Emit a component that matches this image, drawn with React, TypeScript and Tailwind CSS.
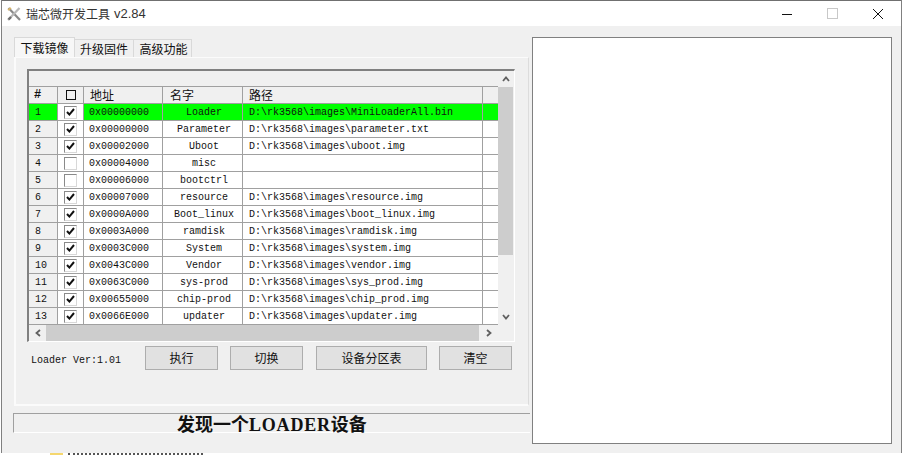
const rows = [
  ['1', true, '0x00000000', 'Loader', 'D:\\rk3568\\images\\MiniLoaderAll.bin'],
  ['2', true, '0x00000000', 'Parameter', 'D:\\rk3568\\images\\parameter.txt'],
  ['3', true, '0x00002000', 'Uboot', 'D:\\rk3568\\images\\uboot.img'],
  ['4', false, '0x00004000', 'misc', ''],
  ['5', false, '0x00006000', 'bootctrl', ''],
  ['6', true, '0x00007000', 'resource', 'D:\\rk3568\\images\\resource.img'],
  ['7', true, '0x0000A000', 'Boot_linux', 'D:\\rk3568\\images\\boot_linux.img'],
  ['8', true, '0x0003A000', 'ramdisk', 'D:\\rk3568\\images\\ramdisk.img'],
  ['9', true, '0x0003C000', 'System', 'D:\\rk3568\\images\\system.img'],
  ['10', true, '0x0043C000', 'Vendor', 'D:\\rk3568\\images\\vendor.img'],
  ['11', true, '0x0063C000', 'sys-prod', 'D:\\rk3568\\images\\sys_prod.img'],
  ['12', true, '0x00655000', 'chip-prod', 'D:\\rk3568\\images\\chip_prod.img'],
  ['13', true, '0x0066E000', 'updater', 'D:\\rk3568\\images\\updater.img'],
] as const;

const cell = 'h-full shrink-0 border-r border-b border-[#a0a0a0] flex items-center';
const cjk = "font-['Noto_Sans_CJK_SC',sans-serif]";

const Check = ({ on }: { on: boolean }) => (
  <div className="w-[13px] h-[13px] border border-[#8a8a8a] border-r-[#d8d8d8] border-b-[#d8d8d8] bg-white flex items-center justify-center">
    {on && (
      <svg width="9" height="9" viewBox="0 0 9 9">
        <path d="M1 4 L3.4 6.6 L8 1" fill="none" stroke="#111" strokeWidth="2" />
      </svg>
    )}
  </div>
);

const Btn = ({ label, w }: { label: string; w: string }) => (
  <button className={`${w} h-[24px] bg-[#e1e1e1] border border-[#adadad] text-[12px] text-[#111] ${cjk}`}>{label}</button>
);

const Chevron = ({ d }: { d: string }) => (
  <svg width="8" height="8" viewBox="0 0 8 8">
    <path d={d} fill="none" stroke="#606060" strokeWidth="1.8" />
  </svg>
);

export default function App() {
  return (
    <div className="w-[903px] h-[455px] overflow-hidden bg-white flex flex-col font-['Liberation_Mono',monospace] text-[10px] text-[#111]">
      {/* window */}
      <div className="h-[453px] w-[901px] ml-px shrink-0 flex flex-col bg-[#f0f0f0] border-x border-[#808080]">
        {/* title bar */}
        <div className="h-[26px] shrink-0 bg-white border-t border-[#707070] flex items-center pl-[5px]">
          <svg width="14" height="14" viewBox="0 0 14 14" className="mr-[5px]">
            <path d="M1.5 1 L13 13" stroke="#8a8a8a" strokeWidth="2.2" />
            <path d="M12.5 1 L1 13" stroke="#b8b8b8" strokeWidth="2.2" />
            <path d="M1 3 L4 1" stroke="#d9b56a" strokeWidth="2" />
            <path d="M1.5 12.5 L4 10" stroke="#6f6f6f" strokeWidth="2.4" />
          </svg>
          <span className={`text-[12px] text-[#333] ${cjk}`}>瑞芯微开发工具</span>
          <span className="ml-[4px] font-['Liberation_Sans',sans-serif] text-[13px] text-[#333]">v2.84</span>
          <div className="ml-auto flex items-center">
            <svg width="12" height="12" viewBox="0 0 12 12" className="mr-[34px]">
              <path d="M1 6.5 H11" stroke="#111" strokeWidth="1" />
            </svg>
            <div className="w-[11px] h-[11px] border border-[#c8c8c8] mr-[34px]" />
            <svg width="12" height="12" viewBox="0 0 12 12" className="mr-[17px]">
              <path d="M1 1 L11 11 M11 1 L1 11" stroke="#111" strokeWidth="1" />
            </svg>
          </div>
        </div>

        <div className="flex-1 flex pl-[11px] pt-[11px]">
          {/* left column */}
          <div className="w-[517px] shrink-0 flex flex-col">
            <div className={`h-[20px] flex items-end text-[12px] pl-[1px] ${cjk}`}>
              <div className="w-[61px] h-[20px] bg-[#f7f7f7] border-x border-t border-[#d9d9d9] flex items-center justify-center">下载镜像</div>
              <div className="w-[59px] h-[18px] bg-[#f0f0f0] border-r border-t border-[#d9d9d9] flex items-center justify-center">升级固件</div>
              <div className="w-[58px] h-[18px] bg-[#f0f0f0] border-r border-t border-[#d9d9d9] flex items-center justify-center pl-[2px]">高级功能</div>
            </div>
            <div className="w-[515px] h-[349px] ml-[1px] border-l-2 border-r border-b-2 border-t border-[#fbfbfb] border-r-[#dcdcdc] pl-[11px] pt-[11px]">
              {/* list */}
              <div className="w-[488px] h-[273px] border-t-2 border-l-2 border-[#808080] border-r border-b border-r-white border-b-white flex flex-col">
                <div className="flex h-[255px]">
                  <div className="w-[469px] flex flex-col bg-white">
                    <div className="h-[16px] bg-[#f0f0f0] border-b border-[#a0a0a0]" />
                    <div className={`h-[17px] flex bg-[#f0f0f0] text-[12px] ${cjk}`}>
                      <div className={`${cell} w-[29px] pl-[5px] font-bold font-['Liberation_Mono']`}>#</div>
                      <div className={`${cell} w-[26px] justify-center`}>
                        <div className="w-[10px] h-[10px] border border-[#111]" />
                      </div>
                      <div className={`${cell} w-[79px] pl-[6px]`}>地址</div>
                      <div className={`${cell} w-[80px] pl-[7px]`}>名字</div>
                      <div className={`${cell} w-[240px] pl-[6px]`}>路径</div>
                      <div className={`${cell} w-[15px] border-r-0`} />
                    </div>
                    {rows.map(([n, on, addr, name, path], i) => (
                      <div key={n} className={`h-[17px] flex shrink-0 ${i === 0 ? 'bg-[#00ff00]' : ''}`}>
                        <div className={`${cell} w-[29px] pl-[6px] text-[10px] ${i === 0 ? '' : 'bg-[#f0f0f0]'}`}>{n}</div>
                        <div className={`${cell} w-[26px] justify-center bg-white`}>
                          <Check on={on} />
                        </div>
                        <div className={`${cell} w-[79px] pl-[5px]`}>{addr}</div>
                        <div className={`${cell} w-[80px] justify-center pl-[3px]`}>{name}</div>
                        <div className={`${cell} w-[240px] pl-[6px]`}>{path}</div>
                        <div className={`${cell} w-[15px] border-r-0`} />
                      </div>
                    ))}
                  </div>
                  <div className="w-[15px] flex flex-col bg-[#f0f0f0]">
                    <div className="h-[16px] flex items-center justify-center">
                      <Chevron d="M1 6 L4 2.5 L7 6" />
                    </div>
                    <div className="h-[168px] bg-[#cdcdcd]" />
                    <div className="flex-1" />
                    <div className="h-[17px] flex items-center justify-center">
                      <Chevron d="M1 2 L4 5.5 L7 2" />
                    </div>
                  </div>
                </div>
                <div className="h-[16px] flex bg-[#f0f0f0]">
                  <div className="w-[17px] flex items-center justify-center">
                    <Chevron d="M6 1 L2.5 4 L6 7" />
                  </div>
                  <div className="w-[433px] bg-[#cdcdcd]" />
                  <div className="flex-1 flex items-center pl-[6px]">
                    <Chevron d="M2 1 L5.5 4 L2 7" />
                  </div>
                </div>
              </div>
              <div className="flex items-center h-[24px] mt-[4px]">
                <span className="w-[118px] pl-[4px] pt-[4px]">Loader Ver:1.01</span>
                <Btn label="执行" w="w-[73px]" />
                <div className="w-[12px]" />
                <Btn label="切换" w="w-[73px]" />
                <div className="w-[13px]" />
                <Btn label="设备分区表" w="w-[111px]" />
                <div className="w-[12px]" />
                <Btn label="清空" w="w-[73px]" />
              </div>
            </div>
            {/* status */}
            <div className="mt-[7px] h-[20px] w-[517px] border-t border-l border-[#a0a0a0] border-b border-b-white flex items-center pl-[163px] pt-[4px]">
              <span className="font-['Liberation_Serif','Noto_Sans_CJK_SC',serif] text-[18px] font-bold text-[#111] leading-none">
                发现一个<span className="tracking-[0.8px]">LOADER</span>设备
              </span>
            </div>
          </div>
          {/* right panel */}
          <div className="w-[360px] h-[407px] ml-[2px] bg-white border border-[#808080]" />
        </div>
      </div>

      {/* what shows through below the window */}
      <div className="h-[2px] flex pl-[50px]">
        <div className="w-[13px] h-full bg-[#f5d76e]" />
        <div className="w-[135px] h-full ml-[5px] border-t-2 border-dotted border-[#555]" />
      </div>
    </div>
  );
}
